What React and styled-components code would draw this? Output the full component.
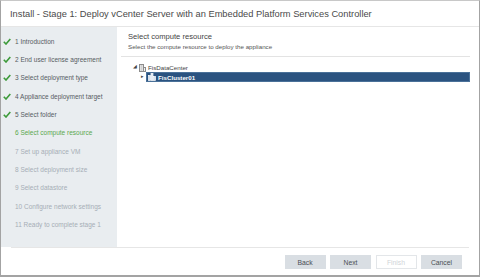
import React from 'react'
import { createGlobalStyle, styled } from 'styled-components'

const Global = createGlobalStyle`
  html, body { margin: 0; padding: 0; background: #ffffff; }
  body { font-family: "Liberation Sans", Arial, sans-serif; }
`

const steps = [
  { label: '1 Introduction', state: 'done' },
  { label: '2 End user license agreement', state: 'done' },
  { label: '3 Select deployment type', state: 'done' },
  { label: '4 Appliance deployment target', state: 'done' },
  { label: '5 Select folder', state: 'done' },
  { label: '6 Select compute resource', state: 'current' },
  { label: '7 Set up appliance VM', state: 'todo' },
  { label: '8 Select deployment size', state: 'todo' },
  { label: '9 Select datastore', state: 'todo' },
  { label: '10 Configure network settings', state: 'todo' },
  { label: '11 Ready to complete stage 1', state: 'todo' },
]

const Check = () => (
  <svg width="8" height="7" viewBox="0 0 8 7">
    <path d="M0.8 3.8 L3 6 L7.3 1" fill="none" stroke="#3d9a3a" strokeWidth="1.6" />
  </svg>
)

const DatacenterIcon = () => (
  <svg width="7" height="8" viewBox="0 0 7 8">
    <rect x="0.5" y="0.5" width="4" height="7" fill="#f2f2f2" stroke="#8c8c8c" />
    <rect x="4.5" y="3.5" width="2" height="4" fill="#f2f2f2" stroke="#8c8c8c" />
    <path d="M1.5 2 H3.5 M1.5 4 H3.5 M1.5 6 H3.5" stroke="#9a9a9a" strokeWidth="0.8" />
  </svg>
)

const ClusterIcon = () => (
  <svg width="8" height="8" viewBox="0 0 8 8">
    <rect x="0.5" y="2.5" width="2" height="5" fill="#d8e2ee" stroke="#ffffff" strokeWidth="0.7" />
    <rect x="3" y="0.5" width="2" height="7" fill="#d8e2ee" stroke="#ffffff" strokeWidth="0.7" />
    <rect x="5.5" y="3.5" width="2" height="4" fill="#d8e2ee" stroke="#ffffff" strokeWidth="0.7" />
  </svg>
)

const App = () => {
  return (
    <>
      <Global />
      <Window>
        <Header>Install - Stage 1: Deploy vCenter Server with an Embedded Platform Services Controller</Header>
        <Body>
          <Sidebar>
            {steps.map((s) => (
              <Step key={s.label} $state={s.state}>
                <Mark>{s.state === 'done' && <Check />}</Mark>
                {s.label}
              </Step>
            ))}
          </Sidebar>
          <Content>
            <PageHead>
              <PageTitle>Select compute resource</PageTitle>
              <PageSub>Select the compute resource to deploy the appliance</PageSub>
            </PageHead>
            <Tree>
              <TreeRow $depth={0}>
                <Toggle>◢</Toggle>
                <Node>
                  <DatacenterIcon />
                  FisDataCenter
                </Node>
              </TreeRow>
              <TreeRow $depth={1}>
                <Toggle>▸</Toggle>
                <Node $selected>
                  <ClusterIcon />
                  FisCluster01
                </Node>
              </TreeRow>
            </Tree>
          </Content>
        </Body>
        <Footer>
          <Button>Back</Button>
          <Button>Next</Button>
          <Button $disabled>Finish</Button>
          <Button>Cancel</Button>
        </Footer>
      </Window>
    </>
  )
}

const Window = styled.div`
  width: 480px;
  height: 277px;
  box-sizing: border-box;
  border: 1px solid #a3a3a3;
  border-top-color: #c8c8c8;
  border-bottom-width: 2px;
  display: flex;
  flex-direction: column;
  background: #ffffff;
`

const Header = styled.div`
  height: 25px;
  flex: none;
  display: flex;
  align-items: center;
  padding-left: 9px;
  border-bottom: 1px solid #e6e6e6;
  font-size: 9.3px;
  color: #4a4a4a;
  white-space: nowrap;
`

const Body = styled.div`
  flex: 1;
  display: flex;
  min-height: 0;
`

const Sidebar = styled.div`
  width: 116px;
  flex: none;
  background: #e9edf0;
  padding-top: 5px;
  box-sizing: border-box;
`

const Step = styled.div`
  height: 18.35px;
  display: flex;
  align-items: center;
  font-size: 6.5px;
  white-space: nowrap;
  color: ${(p) => (p.$state === 'done' ? '#565c62' : p.$state === 'current' ? '#5aa84e' : '#a6aeb6')};
`

const Mark = styled.span`
  width: 14px;
  padding-left: 2px;
  box-sizing: border-box;
  display: flex;
  align-items: center;
`

const Content = styled.div`
  flex: 1;
  padding: 0 9px 0 4px;
`

const PageHead = styled.div`
  padding: 4px 0 5px 7px;
  border-bottom: 1px solid #e3e3e3;
`

const PageTitle = styled.div`
  font-size: 7.6px;
  line-height: 11px;
  color: #444;
`

const PageSub = styled.div`
  font-size: 6.2px;
  line-height: 9px;
  color: #555;
`

const Tree = styled.div`
  padding-top: 6px;
  padding-left: 12px;
`

const TreeRow = styled.div`
  height: ${(p) => (p.$depth === 0 ? 9 : 10)}px;
  display: flex;
  align-items: center;
  padding-left: ${(p) => p.$depth * 8}px;
`

const Toggle = styled.span`
  width: 5px;
  font-size: 4.5px;
  color: #444;
  line-height: 1;
`

const Node = styled.div`
  flex: ${(p) => (p.$selected ? 1 : 'none')};
  height: 100%;
  display: flex;
  align-items: center;
  gap: 2px;
  padding-left: ${(p) => (p.$selected ? 1 : 0)}px;
  font-size: 6.2px;
  font-weight: ${(p) => (p.$selected ? 700 : 400)};
  color: ${(p) => (p.$selected ? '#ffffff' : '#444')};
  background: ${(p) => (p.$selected ? '#2b5380' : 'transparent')};
  border: 1px solid ${(p) => (p.$selected ? '#4a7199' : 'transparent')};
  box-sizing: border-box;
`

const Footer = styled.div`
  height: 28px;
  flex: none;
  margin: 0 10px;
  border-top: 1px solid #e6e6e6;
  display: flex;
  justify-content: flex-end;
  align-items: flex-start;
  gap: 4.5px;
  padding-top: 7px;
  padding-right: 7px;
  box-sizing: border-box;
`

const Button = styled.div`
  width: 41px;
  height: 14px;
  box-sizing: border-box;
  display: flex;
  align-items: center;
  justify-content: center;
  font-size: 6.8px;
  color: ${(p) => (p.$disabled ? '#d0d4d8' : '#4a4f54')};
  background: ${(p) => (p.$disabled ? '#ffffff' : '#d9dee3')};
  border: 1px solid ${(p) => (p.$disabled ? '#e3e6e9' : '#d9dee3')};
`

export default App
